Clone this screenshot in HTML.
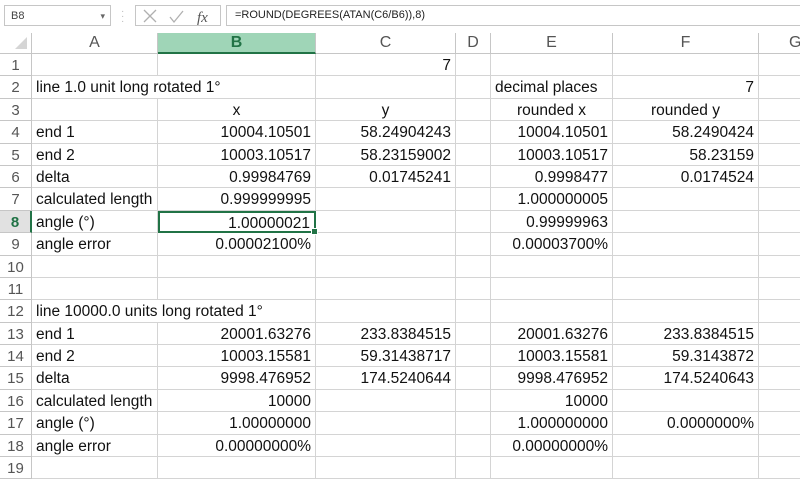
<!DOCTYPE html>
<html><head><meta charset="utf-8"><style>
body{margin:0;width:800px;height:477px;overflow:hidden;background:#fff;font-family:"Liberation Sans",Arial,sans-serif;position:relative}
.fb{position:absolute;left:0;top:0;width:800px;height:33px;background:#fff}
.nb{position:absolute;left:4px;top:5px;width:107px;height:21px;border:1px solid #c6c6c6;font-size:11px;color:#444;line-height:21px;box-sizing:border-box;padding-left:6px}
.nb:after{content:"▾";position:absolute;right:5px;top:0;font-size:9px;color:#666}
.ic{position:absolute;left:135px;top:5px;width:86px;height:21px;border:1px solid #c6c6c6;box-sizing:border-box}
.fx{position:absolute;left:226px;top:5px;width:580px;height:21px;border:1px solid #c6c6c6;box-sizing:border-box;font-size:11px;line-height:19px;padding-left:8px;color:#222}
.g{position:absolute;left:0;top:33px;display:grid;grid-template-columns:32px 126px 158px 140px 35px 122px 146px 42px;grid-template-rows:21px repeat(19,22.4px)}
.g div{border-right:1px solid #d4d4d4;border-bottom:1px solid #d4d4d4;box-sizing:border-box;font-size:15.5px;color:#111;line-height:23px;white-space:nowrap;overflow:hidden;padding:0 4px}
.g .h{color:#555;text-align:center;font-size:16px;line-height:20px;background:#fff;border-color:#c6c6c6}
.g .r{color:#555;text-align:center;font-size:15px;padding:0;border-color:#c6c6c6}
.g .n{text-align:right}
.g .c{text-align:center}
.g .s2{grid-column:span 2;overflow:visible}
</style></head><body>
<div class="fb">
<div class="nb">B8</div>
<div style="position:absolute;left:121px;top:9px;color:#bbb;font-size:10px;line-height:5px">·<br>·<br>·</div>
<div class="ic">
<svg width="86" height="21" style="position:absolute;left:0;top:0"><path d="M8 4l12 12M20 4L8 16" stroke="#b0b0b0" stroke-width="1.3"/><path d="M34 11l4 5 9-11" stroke="#b0b0b0" stroke-width="1.3" fill="none"/><text x="61" y="16" font-family="Liberation Serif" font-style="italic" font-size="15" fill="#555">fx</text></svg>
</div>
<div class="fx">=ROUND(DEGREES(ATAN(C6/B6)),8)</div>
</div>
<div class="g">
<div class="h" style="position:relative"><svg width="14" height="14" style="position:absolute;right:3px;bottom:3px"><path d="M13 1L13 13 1 13z" fill="#d5d5d5"/></svg></div><div class="h">A</div><div class="h" style="background:#9fd5b7;color:#217346;font-weight:bold;border-bottom:2px solid #217346">B</div><div class="h">C</div><div class="h">D</div><div class="h">E</div><div class="h">F</div><div class="h" style="text-align:left;padding-left:30px">G</div>

<div class="r">1</div><div></div><div></div><div class="n">7</div><div></div><div></div><div></div><div></div>
<div class="r">2</div><div class="s2">line 1.0 unit long rotated 1°</div><div></div><div></div><div>decimal places</div><div class="n">7</div><div></div>
<div class="r">3</div><div></div><div class="c">x</div><div class="c">y</div><div></div><div class="c">rounded x</div><div class="c">rounded y</div><div></div>
<div class="r">4</div><div>end 1</div><div class="n">10004.10501</div><div class="n">58.24904243</div><div></div><div class="n">10004.10501</div><div class="n">58.2490424</div><div></div>
<div class="r">5</div><div>end 2</div><div class="n">10003.10517</div><div class="n">58.23159002</div><div></div><div class="n">10003.10517</div><div class="n">58.23159</div><div></div>
<div class="r">6</div><div>delta</div><div class="n">0.99984769</div><div class="n">0.01745241</div><div></div><div class="n">0.9998477</div><div class="n">0.0174524</div><div></div>
<div class="r">7</div><div>calculated length =</div><div class="n">0.999999995</div><div></div><div></div><div class="n">1.000000005</div><div></div><div></div>
<div class="r" style="background:#e1e1e1;color:#217346;font-weight:bold;border-right:2px solid #217346">8</div><div>angle (°)</div><div class="n" style="border:2px solid #217346;line-height:21px;position:relative;overflow:visible">1.00000021<span style="position:absolute;right:-4px;bottom:-4px;width:5px;height:5px;background:#217346;border:1px solid #fff"></span></div><div></div><div></div><div class="n">0.99999963</div><div></div><div></div>
<div class="r">9</div><div>angle error</div><div class="n">0.00002100%</div><div></div><div></div><div class="n">0.00003700%</div><div></div><div></div>
<div class="r">10</div><div></div><div></div><div></div><div></div><div></div><div></div><div></div>
<div class="r">11</div><div></div><div></div><div></div><div></div><div></div><div></div><div></div>
<div class="r">12</div><div class="s2">line 10000.0 units long rotated 1°</div><div></div><div></div><div></div><div></div><div></div>
<div class="r">13</div><div>end 1</div><div class="n">20001.63276</div><div class="n">233.8384515</div><div></div><div class="n">20001.63276</div><div class="n">233.8384515</div><div></div>
<div class="r">14</div><div>end 2</div><div class="n">10003.15581</div><div class="n">59.31438717</div><div></div><div class="n">10003.15581</div><div class="n">59.3143872</div><div></div>
<div class="r">15</div><div>delta</div><div class="n">9998.476952</div><div class="n">174.5240644</div><div></div><div class="n">9998.476952</div><div class="n">174.5240643</div><div></div>
<div class="r">16</div><div>calculated length =</div><div class="n">10000</div><div></div><div></div><div class="n">10000</div><div></div><div></div>
<div class="r">17</div><div>angle (°)</div><div class="n">1.00000000</div><div></div><div></div><div class="n">1.000000000</div><div class="n">0.0000000%</div><div></div>
<div class="r">18</div><div>angle error</div><div class="n">0.00000000%</div><div></div><div></div><div class="n">0.00000000%</div><div></div><div></div>
<div class="r">19</div><div></div><div></div><div></div><div></div><div></div><div></div><div></div>
</div>
</body></html>
